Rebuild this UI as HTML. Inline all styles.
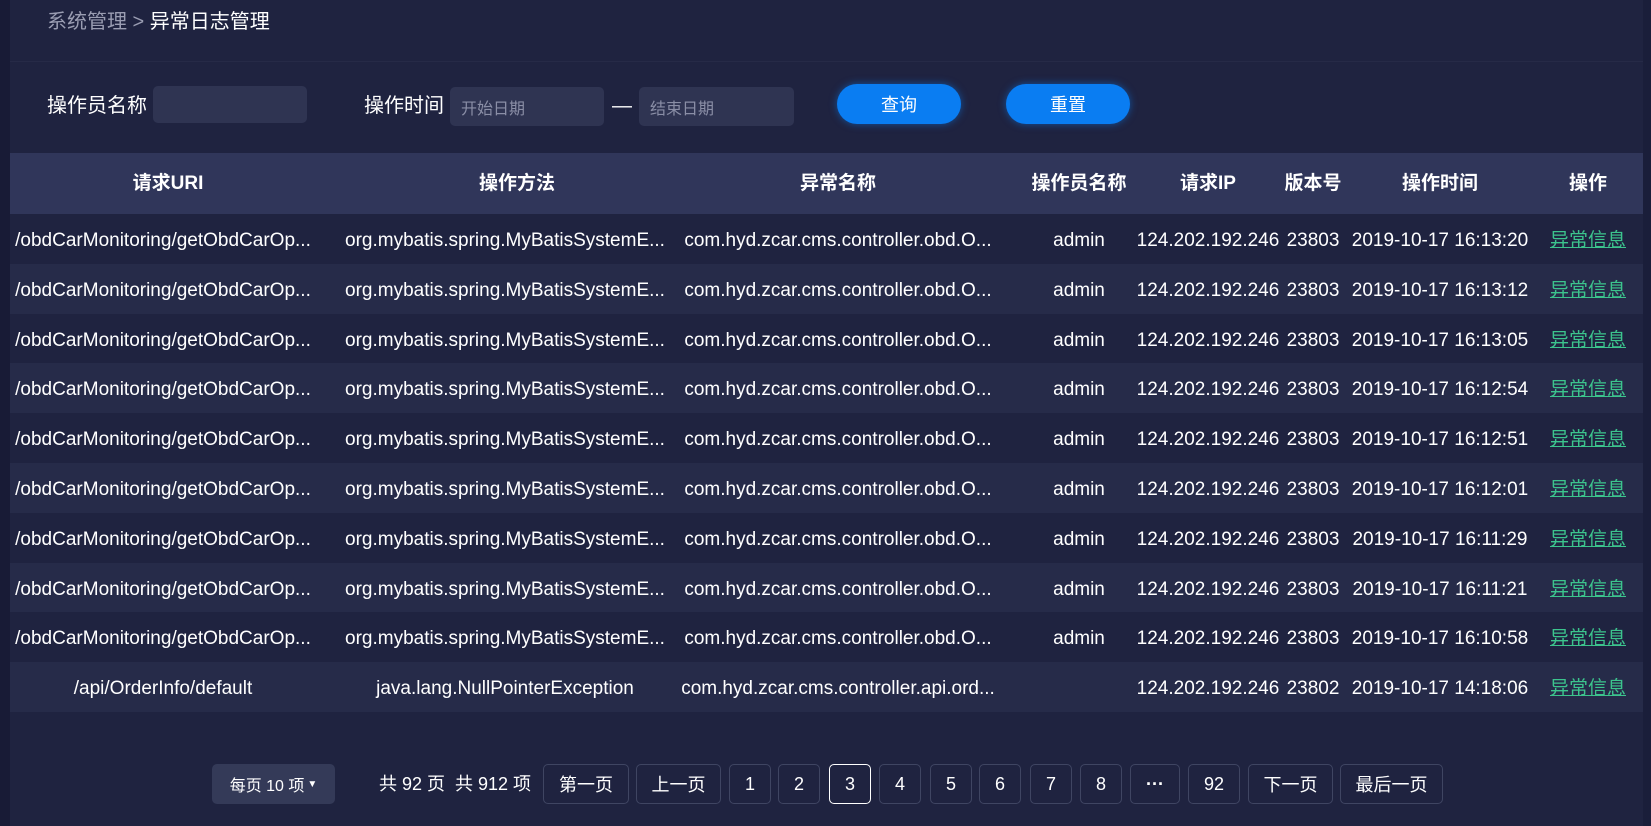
<!DOCTYPE html>
<html><head><meta charset="utf-8"><style>
*{margin:0;padding:0;box-sizing:border-box}
body{width:1651px;height:826px;background:#1f2340;font-family:"Liberation Sans","Noto Sans CJK SC",sans-serif;color:#fff;position:relative;overflow:hidden}
.a{position:absolute}
.strip{left:0;top:0;width:10px;height:826px;background:#181b36}
.rstrip{left:1643px;top:0;width:8px;height:826px;background:#1a1e3a}
.bc{left:47px;top:9px;font-size:20px;line-height:26px}
.sep{left:10px;top:61px;width:1633px;height:1px;background:#262a47}
.lbl{font-size:20px;line-height:26px}
.inp{background:#2f3452;border-radius:5px;color:#8a8ea6;font-size:16px;padding-left:11px;display:flex;align-items:center}
.btn{background:#0a7df2;border-radius:20px;box-shadow:0 0 8px rgba(10,125,242,.55);font-size:18px;display:flex;align-items:center;justify-content:center}
.hdr{left:10px;top:153px;width:1633px;height:61px;background:#30365a}
.row{left:10px;width:1633px;height:49.8px}
.alt{background:#262b49}
.c{position:absolute;width:400px;text-align:center;font-size:19px;white-space:nowrap;line-height:24px}
.h{font-weight:bold;font-size:19px}
.lnk{color:#3cc48d;text-decoration:underline}
.pg{position:absolute;top:764px;height:40px;border:1px solid #3f4562;border-radius:5px;font-size:18px;display:flex;align-items:center;justify-content:center}
</style></head><body>
<div class="a strip"></div><div class="a rstrip"></div>
<div class="a bc"><span style="color:#9a9db2">系统管理 &gt; </span>异常日志管理</div>
<div class="a sep"></div>
<div class="a lbl" style="left:47px;top:93px">操作员名称</div>
<div class="a inp" style="left:153px;top:86px;width:154px;height:37px"></div>
<div class="a lbl" style="left:364px;top:93px">操作时间</div>
<div class="a inp" style="left:450px;top:87px;width:154px;height:39px">开始日期</div>
<div class="a lbl" style="left:612px;top:93px">—</div>
<div class="a inp" style="left:639px;top:87px;width:155px;height:39px">结束日期</div>
<div class="a btn" style="left:837px;top:84px;width:124px;height:40px">查询</div>
<div class="a btn" style="left:1006px;top:84px;width:124px;height:40px">重置</div>
<div class="a hdr"></div>
<div id="t"></div>
<div class="a" style="left:212px;top:764px;width:123px;height:40px;background:#343a58;border-radius:5px;font-size:16px;display:flex;align-items:center;justify-content:center">每页 10 项 <span style="font-size:10px;margin-left:3px">▼</span></div>
<div class="a" style="left:379px;top:771px;font-size:18px;line-height:26px">共 92 页&nbsp; 共 912 项</div>
<div class="pg" style="left:543px;width:86px">第一页</div>
<div class="pg" style="left:636px;width:85px">上一页</div>
<div class="pg" style="left:729px;width:42px">1</div>
<div class="pg" style="left:778px;width:42px">2</div>
<div class="pg" style="left:829px;width:42px;border-color:#fff">3</div>
<div class="pg" style="left:879px;width:42px">4</div>
<div class="pg" style="left:930px;width:42px">5</div>
<div class="pg" style="left:979px;width:42px">6</div>
<div class="pg" style="left:1030px;width:42px">7</div>
<div class="pg" style="left:1080px;width:42px">8</div>
<div class="pg" style="left:1130px;width:50px;font-weight:bold">···</div>
<div class="pg" style="left:1188px;width:52px">92</div>
<div class="pg" style="left:1248px;width:85px">下一页</div>
<div class="pg" style="left:1340px;width:103px">最后一页</div>
<script>
(function(){
var cx=[163,505,838,1079,1208,1313,1440,1588];
var hx=[168,517,838,1079,1208,1313,1440,1588];
var H=["请求URI","操作方法","异常名称","操作员名称","请求IP","版本号","操作时间","操作"];
var times=["16:13:20","16:13:12","16:13:05","16:12:54","16:12:51","16:12:01","16:11:29","16:11:21","16:10:58"];
var s="";
for(var i=0;i<8;i++)s+='<div class="c h" style="left:'+(hx[i]-200)+'px;top:172px">'+H[i]+'</div>';
for(var r=0;r<10;r++){
 var yy=214+r*49.8;
 s+='<div class="a row'+(r%2?' alt':'')+'" style="top:'+yy+'px"></div>';
 var d=r<9?["/obdCarMonitoring/getObdCarOp...","org.mybatis.spring.MyBatisSystemE...","com.hyd.zcar.cms.controller.obd.O...","admin","124.202.192.246","23803","2019-10-17 "+times[r]]:
 ["/api/OrderInfo/default","java.lang.NullPointerException","com.hyd.zcar.cms.controller.api.ord...","","124.202.192.246","23802","2019-10-17 14:18:06"];
 var ty=yy+15;
 for(var j=0;j<7;j++)s+='<div class="c" style="left:'+(cx[j]-200)+'px;top:'+ty+'px">'+d[j]+'</div>';
 s+='<div class="c lnk" style="left:'+(cx[7]-200)+'px;top:'+ty+'px">异常信息</div>';
}
document.getElementById("t").innerHTML=s;
})();
</script>
</body></html>
